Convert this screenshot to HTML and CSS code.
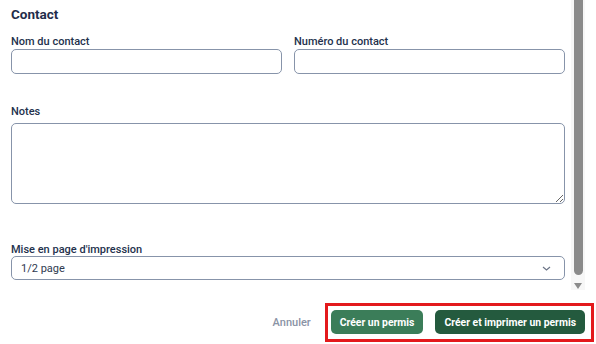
FILE: index.html
```html
<!DOCTYPE html>
<html lang="fr">
<head>
    <meta charset="UTF-8">
    <meta name="viewport" content="width=device-width, initial-scale=1.0">
    <title>Nouveau permis</title>
    <link rel="stylesheet" href="styles.css">
</head>
<body>
    <div class="layout">
        <form class="form">
            <h2 class="section-title">Contact</h2>

            <div class="row">
                <div class="field">
                    <label for="contactName">Nom du contact</label>
                    <input type="text" id="contactName" class="input">
                </div>
                <div class="field">
                    <label for="contactPhone">Numéro du contact</label>
                    <input type="text" id="contactPhone" class="input">
                </div>
            </div>

            <div class="field field-notes">
                <label for="notes">Notes</label>
                <textarea id="notes" class="textarea"></textarea>
            </div>

            <div class="field field-layout">
                <label for="printLayout">Mise en page d'impression</label>
                <div class="select-wrap">
                    <select id="printLayout" class="select">
                        <option>1/2 page</option>
                        <option>Page complète</option>
                    </select>
                    <svg class="chevron" width="9" height="5" viewBox="0 0 9 5">
                        <path d="M1 1 L4.5 4 L8 1" fill="none" stroke="#6b7487" stroke-width="1.2"/>
                    </svg>
                </div>
            </div>
        </form>

        <!-- scrollbar of the dialog body -->
        <div class="scrollbar">
            <div class="scroll-thumb"></div>
            <div class="scroll-arrow"></div>
        </div>
    </div>

    <div class="footer">
        <button type="button" class="btn-cancel">Annuler</button>
        <div class="highlight">
            <button type="button" class="btn btn-create">Créer un permis</button>
            <button type="button" class="btn btn-print">Créer et imprimer un permis</button>
        </div>
    </div>
</body>
</html>
```

FILE: styles.css
```css
body {
    margin: 0;
    font-family: Roboto, "Liberation Sans", sans-serif;
    background-color: #ffffff;
    color: #24324d;
}
.layout {
    display: flex;
    height: 290px;
    padding-right: 11px;
}
.form {
    flex: 1;
    padding: 6px 6px 0 11px;
}
.section-title {
    margin: 0;
    font-size: 13.5px;
    line-height: 17px;
    font-weight: 700;
    color: #1f2d4a;
}
.row {
    display: grid;
    grid-template-columns: 1fr 1fr;
    gap: 12px;
    margin-top: 12px;
}
.field label {
    display: block;
    font-size: 11px;
    line-height: 13px;
    font-weight: 500;
    color: #24324d;
}
.input {
    display: block;
    box-sizing: border-box;
    width: 100%;
    height: 25px;
    margin: 1px 0 0;
    border: 1px solid #8794aa;
    border-radius: 5px;
    background: #ffffff;
}
.field-notes {
    margin-top: 31px;
}
.textarea {
    display: block;
    box-sizing: border-box;
    width: 100%;
    height: 81px;
    margin: 5px 0 0;
    border: 1px solid #8794aa;
    border-radius: 5px;
    font-family: inherit;
}
.field-layout {
    margin-top: 39px;
}
.select-wrap {
    position: relative;
}
.select {
    display: block;
    box-sizing: border-box;
    width: 100%;
    height: 24px;
    padding: 0 9px;
    border: 1px solid #8794aa;
    border-radius: 5px;
    background: #ffffff;
    appearance: none;
    font-family: inherit;
    font-size: 11px;
    color: #2f3a4f;
}
.chevron {
    position: absolute;
    right: 14px;
    top: 10px;
}
.scrollbar {
    width: 14px;
    background-color: #f7f7f7;
    display: flex;
    flex-direction: column;
    align-items: center;
}
.scroll-thumb {
    width: 9px;
    height: 275px;
    background-color: #8b8b8b;
    border-radius: 0 0 5px 5px;
}
.scroll-arrow {
    margin-top: 8px;
    width: 0;
    height: 0;
    border-left: 4px solid transparent;
    border-right: 4px solid transparent;
    border-top: 6px solid #8b8b8b;
}
.footer {
    display: flex;
    justify-content: flex-end;
    align-items: center;
    margin-top: 13px;
    padding-right: 2px;
}
.btn-cancel {
    margin-right: 14px;
    padding: 0;
    border: none;
    background: none;
    font-family: inherit;
    font-size: 11px;
    font-weight: 500;
    color: #8a93a5;
    cursor: pointer;
}
.highlight {
    display: flex;
    gap: 12px;
    padding: 4px 6px 5px 3px;
    border: 3px solid #e3191c;
}
.btn {
    height: 24px;
    padding: 0 9px;
    border: none;
    border-radius: 5px;
    color: white;
    font-family: inherit;
    font-size: 10.4px;
    font-weight: 700;
    cursor: pointer;
}
.btn-create {
    background-color: #3b7d59;
}
.btn-print {
    background-color: #245a3e;
}
```
